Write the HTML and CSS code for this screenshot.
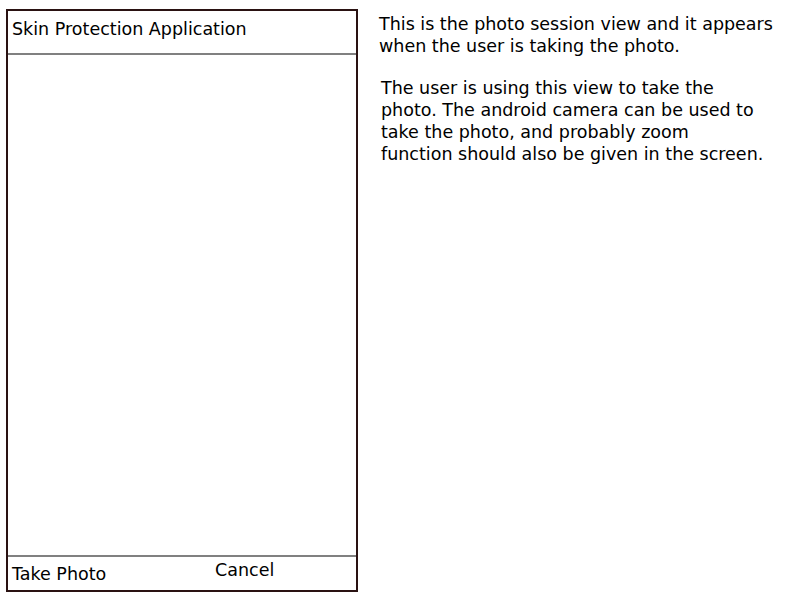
FILE: index.html
```html
<!DOCTYPE html>
<html>
<head>
<meta charset="utf-8">
<link rel="stylesheet" href="styles.css">
</head>
<body>
<div class="page">
  <div class="phone">
    <div class="header">Skin Protection Application</div>
    <div class="viewport"></div>
    <div class="footer">
      <span class="btn-take">Take Photo</span>
      <span class="btn-cancel">Cancel</span>
    </div>
  </div>
  <div class="notes">
    <p class="note note-first">This is the photo session view and it appears<br>when the user is taking the photo.</p>
    <p class="note note-second">The user is using this view to take the<br>photo. The android camera can be used to<br>take the photo, and probably zoom<br>function should also be given in the screen.</p>
  </div>
</div>
</body>
</html>
```
FILE: styles.css
```css
html, body {
  margin: 0;
  padding: 0;
  background: #ffffff;
}
body {
  font-family: "DejaVu Sans", sans-serif;
  font-size: 17.5px;
  line-height: 22px;
  color: #000000;
}
.page {
  display: flex;
  align-items: flex-start;
  width: 800px;
  height: 600px;
}
.phone {
  box-sizing: border-box;
  margin: 9px 0 0 6px;
  width: 352px;
  height: 583px;
  border: 2px solid #2a1212;
  display: flex;
  flex-direction: column;
}
.header {
  box-sizing: border-box;
  height: 44px;
  padding: 7px 0 0 4px;
  border-bottom: 2px solid #808080;
  white-space: nowrap;
}
.viewport {
  flex: 1;
}
.footer {
  box-sizing: border-box;
  height: 35px;
  border-top: 2px solid #808080;
  display: grid;
  grid-template-columns: 203px 1fr;
  align-items: start;
  padding: 6px 0 0 4px;
}
.btn-cancel {
  margin-top: -4px;
}
.notes {
  margin-left: 21px;
  padding-top: 13px;
}
.note {
  margin: 0;
  white-space: nowrap;
}
.note-second {
  margin-top: 20px;
  margin-left: 2px;
}
```
